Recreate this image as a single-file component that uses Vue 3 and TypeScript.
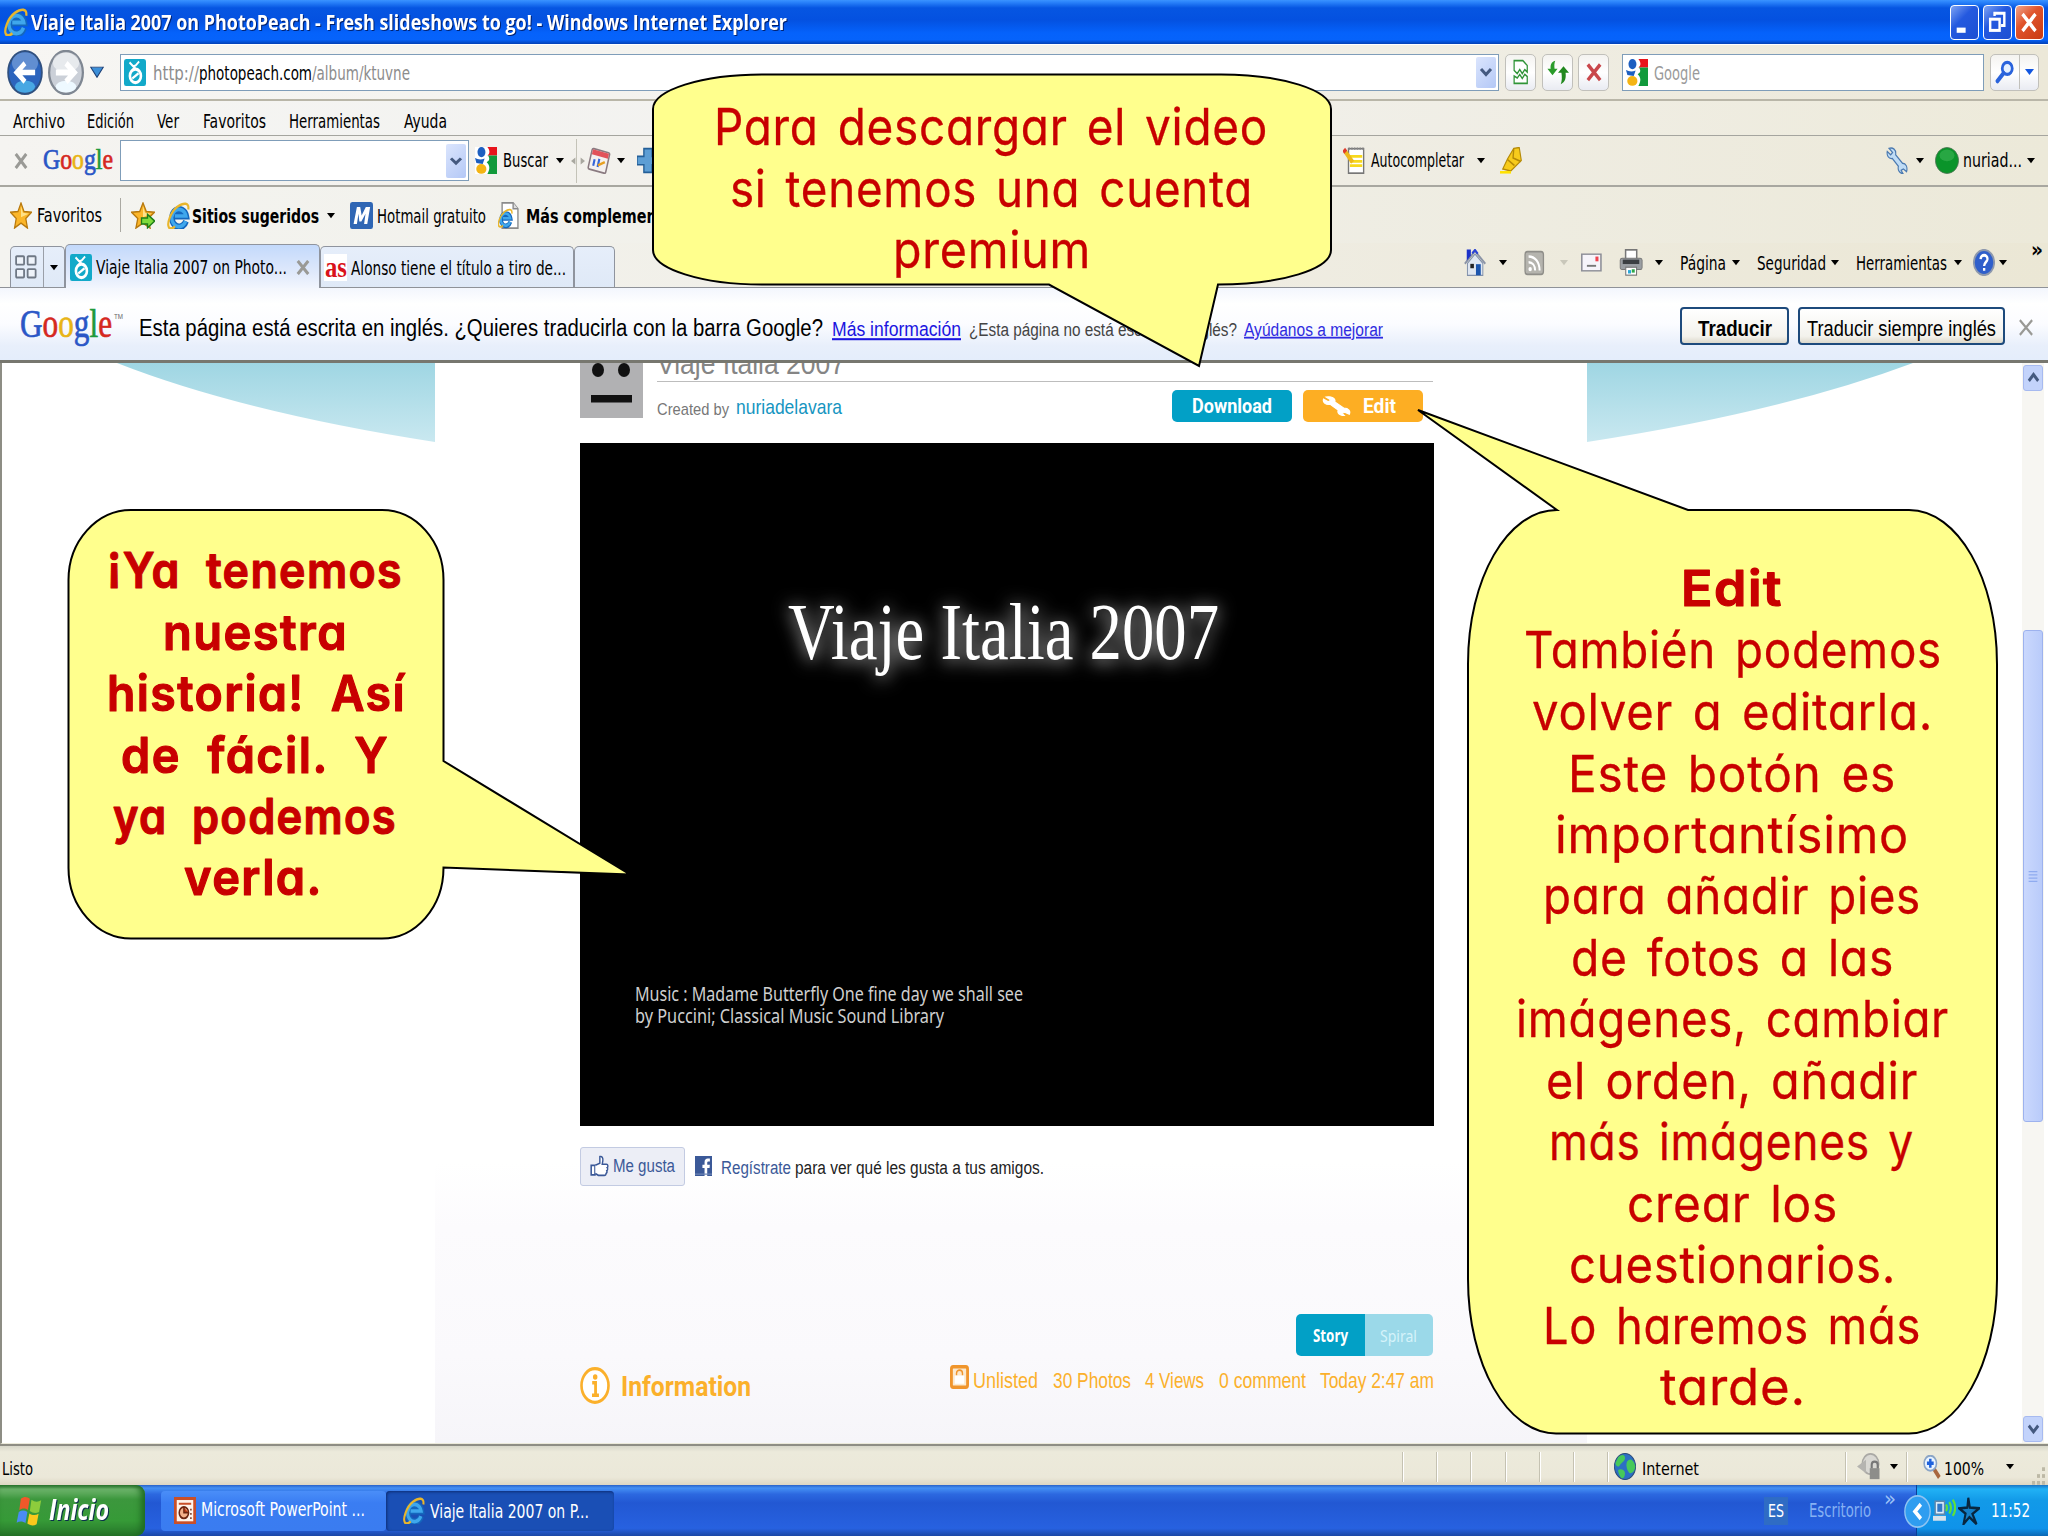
<script setup lang="ts">
import { h, type FunctionalComponent } from 'vue'

interface TextProps { t: string; w: number; s?: number; f?: string; b?: number; c?: string; dy?: number; h?: number; base?: number; i?: boolean; u?: boolean }

const families: Record<string, string> = {
  ui: '"DejaVu Sans Condensed", "DejaVu Sans", sans-serif',
  arial: '"Liberation Sans", sans-serif',
  title: '"Open Sans", sans-serif',
  serif: '"Liberation Serif", serif',
  web: '"Noto Sans", sans-serif',
  din: 'Roboto, sans-serif',
}

// A label fitted to an exact width
const T: FunctionalComponent<TextProps> = (p) => {
  const s = p.s ?? 19
  const height = p.h ?? s * 1.2
  const base = p.base ?? s * 0.96 + (p.dy ?? 0)
  return h('svg', { width: p.w, height, style: { overflow: 'visible', display: 'block' } }, [
    h('text', {
      x: 0, y: base, textLength: p.w, lengthAdjust: 'spacingAndGlyphs', fill: p.c ?? '#000',
      'font-family': families[p.f ?? 'ui'], 'font-size': s, 'font-weight': p.b ?? 400,
      'font-style': p.i ? 'italic' : 'normal', 'text-decoration': p.u ? 'underline' : 'none',
    }, p.t),
  ])
}

const letters: [string, string][] = [['G', '#2a56c6'], ['o', '#d5281f'], ['o', '#e8b416'], ['g', '#2a56c6'], ['l', '#1f9a3a'], ['e', '#d5281f']]
const Google: FunctionalComponent<{ w: number; s: number; dy?: number }> = (p) =>
  h('svg', { width: p.w, height: p.s * 1.2, style: { overflow: 'visible', display: 'block' } }, [
    h('text', { x: 0, y: p.s * 0.96 + (p.dy ?? 0), textLength: p.w, lengthAdjust: 'spacingAndGlyphs', 'font-family': families.serif, 'font-size': p.s, 'stroke-width': 0.7 },
      letters.map(([l, c]) => h('tspan', { fill: c, stroke: c }, l))),
  ])

const peach = '<rect width="16" height="16" rx="1.5" fill="#12a9c9"/><ellipse cx="8.3" cy="10" rx="4" ry="4" fill="none" stroke="#fff" stroke-width="1.9"/><path d="M6 11.6 10.6 8.4" stroke="#fff" stroke-width="1.5"/><path d="M8 6 7.6 3.4M7.4 5 4 2M8.3 4 11 1.5" stroke="#fff" stroke-width="1.3"/>'
const ie = '<path d="M13.2 11.4A5 5.2 0 1 1 13.4 8.4H5.5" fill="none" stroke="#1467bd" stroke-width="4"/><path d="M13 11.3A5 5.1 0 1 1 13.2 8.3H5.5" fill="none" stroke="#3fa7ec" stroke-width="2.2"/><path d="M14.8 4.4C15.600.2 11.600.2 7.200 2.800 2.400 6 -.2 12.800 1.300 15c.9 1 2.700.6 4.300-.5" fill="none" stroke="#e9b62c" stroke-width="1.500"/>'
const star = '<path d="M8 .6 10.2 5.6 15.6 6.1 11.5 9.8 12.7 15.4 8 12.5 3.3 15.4 4.5 9.8.4 6.1 5.8 5.6Z" fill="#fbb62a" stroke="#b8790d" stroke-width=".9"/><path d="M8 2.5 9.4 6.4 13.5 7 8 9Z" fill="#ffe188"/>'
const wrench = (fill: string, stroke: string) => `<path d="M2.2.8C5 0 7.6 1.6 7 4.6L12 9.6C14.6 9.6 15.8 12 15 14.6L12.6 13 11 13.8 12.4 15.8C9.6 15.6 8.4 13.6 9 11.4L4.6 6.8C1.8 7.2.4 5 .9 2.6L3.4 4.6 4.8 3.2Z" fill="${fill}" stroke="${stroke}" stroke-width=".8"/>`

const art: Record<string, string> = {
  peach, ie, star,
  starAdd: star + '<path d="M7 9.5h4V7.3l4.8 4-4.8 4v-2.3H7Z" fill="#7fdc3c" stroke="#1d7d18" stroke-width=".9"/>',
  gicon: '<rect width="16" height="16" fill="#fff"/><path d="M9 0h7v5H9C11 4 11 2 9 0Z" fill="#e8141b"/><path d="M9.5 5H16v11H9c2-3 2-5-.5-7C10.5 8 11 7 9.5 5Z" fill="#119a3b"/><ellipse cx="4.7" cy="3" rx="2.9" ry="3" fill="#1d5fc0"/><path d="M0 6.5c2 .8 4 1.3 7 .3L5.6 10 1 9.5Z" fill="#1d5fc0"/><ellipse cx="4.6" cy="13" rx="3.7" ry="2.9" fill="#f4b413"/>',
  calendar: '<g transform="rotate(14 8 8)"><rect x="2" y="2" width="12" height="12.5" rx="1" fill="#f4f0ef" stroke="#8a7a80"/><rect x="2.5" y="2.5" width="11" height="3" fill="#e2525a"/><path d="M5 8v4M8 7v5" stroke="#3464d8" stroke-width="1.4"/><path d="M8 11l4-3" stroke="#e8a020" stroke-width="1.5"/></g>',
  plus: '<path d="M5 1h6v4.5h5v5h-5V15H5v-4.500H0v-5h5Z" fill="#5d9ed4" stroke="#245f97"/>',
  notepad: '<rect x="4" y="1" width="11" height="14.5" fill="#fff" stroke="#777"/><path d="M5 5.5h9M5 8.5h9M5 11h9" stroke="#f7d91c" stroke-width="1.6"/><path d="M1.5 2.5 7 9" stroke="#eeb81c" stroke-width="2.8"/><path d="M.5 1.4 2 3" stroke="#e03a2b" stroke-width="2.8"/><path d="M4 1h11" stroke="#888" stroke-dasharray="1 1" stroke-width="1.4"/>',
  marker: '<path d="M10 .8 14 .3 15.5 8 7.800 14.200 2 13 5.500 7Z" fill="#f7cb1c" stroke="#b58a08" stroke-width=".8"/><path d="M5.500 7.500 10.500 11M10 1 9.500 6.500l5.500 2" fill="none" stroke="#b58a08"/><path d="M0 15h8" stroke="#ffe200" stroke-width="1.5"/>',
  wrench: wrench('#bfdcf5', '#4a79b0'),
  wrenchWhite: wrench('#fff', '#fff'),
  user: '<ellipse cx="8" cy="8" rx="7.7" ry="7.7" fill="#0a942a" stroke="#4d7052" stroke-width=".5"/><ellipse cx="8" cy="5" rx="5" ry="3.5" fill="#45b95c" opacity=".5"/>',
  m: '<rect width="16" height="16" rx="1.5" fill="#2f66b4"/><path d="M2.500 13 4.800 3h2.300l1 5L11 3h3l-2 10h-2.200l1-6-2.900 4.500H6.500L5.900 7 4.800 13Z" fill="#fff"/>',
  page: '<path d="M3 .5h8L14.500 4v11.500H3Z" fill="#fff" stroke="#8b8b8b"/><path d="M11 .5V4h3.500" fill="#ddd" stroke="#8b8b8b"/><g transform="translate(-.3 3.800) scale(.7)">' + ie + '</g>',
  quad: '<g fill="#eef3fa" stroke="#6f7885" stroke-width="1.3"><rect x=".8" y=".8" width="5.8" height="5.6" rx=".6"/><rect x="9.2" y=".8" width="5.8" height="5.6" rx=".6"/><rect x=".8" y="9.4" width="5.8" height="5.6" rx=".6"/><rect x="9.2" y="9.4" width="5.8" height="5.6" rx=".6"/></g>',
  home: '<path d="M2.500 8.500 8 3l5.700 5.500V15.600H2.500Z" fill="#dfe6f0" stroke="#8190aa" stroke-width=".7"/><path d="M.6 8.800 8 1.200l7.500 7.600" fill="none" stroke="#8b94a6" stroke-width="1.3"/><path d="M2 .3h3v3.500L2 7Z" fill="#1c32c9"/><path d="M6 2.600 8 .6 10 2.800" fill="none" stroke="#2a42d4" stroke-width="1.4"/><rect x="8.7" y="9" width="3.5" height="6.5" fill="#1c55ad"/><rect x="4.6" y="8.8" width="2.6" height="2.6" fill="#222"/>',
  rss: '<rect x=".8" y="1.5" width="14" height="13.5" rx="1.8" fill="#b5b4ae" stroke="#8f8e89"/><path d="M3.500 4.400c5 0 8.400 3.500 8.400 8.400M3.500 7.900c3 0 5 2 5 4.900" fill="none" stroke="#fff" stroke-width="1.5"/><circle cx="4.7" cy="11.9" r="1.3" fill="#fff"/>',
  mail: '<rect x=".6" y="1" width="14.6" height="14" fill="#f6f4fa" stroke="#8e8f98" stroke-width="1.2"/><path d="M4.500 10.800h7" stroke="#777" stroke-width="1.6"/><rect x="11" y="3" width="2.3" height="4" fill="#f0434e"/>',
  printer: '<rect x="4.4" y=".5" width="7.4" height="7" fill="#fff" stroke="#777"/><rect x=".8" y="5.5" width="14.6" height="6.7" rx="1.2" fill="#9a9ea2" stroke="#777" stroke-width=".6"/><rect x="2.5" y="6.3" width="11" height="2.6" fill="#3b3f42"/><rect x="4.5" y="10.8" width="7.2" height="4.7" fill="#fff" stroke="#777" stroke-width=".7"/><path d="M6 12.500h2v2H6Z" fill="#2aa7d8"/><path d="M8.500 12h2v2h-2Z" fill="#2fa84a"/>',
  help: '<ellipse cx="8" cy="8" rx="7.4" ry="7.4" fill="#2f5fcb" stroke="#8d98ad" stroke-width="1.3"/><path d="M5.500 6C5.600 2.900 10.700 3 10.500 6c-.2 1.800-2.400 1.800-2.400 4M8.100 11.200v1.700" fill="none" stroke="#fff" stroke-width="1.7"/>',
  broken: '<path d="M2.500 1h7L13 4v4l-2-1.500L9 9 7 6.500 5 9 2.500 7Z" fill="#fff" stroke="#2f9437"/><path d="M2.500 10.500 5 11.700 7 9.500 9 12l2-2.500 2 1.300V15H2.500Z" fill="#fff" stroke="#2f9437"/>',
  refresh: '<path d="M6 1C3 1.500 2.300 4 2.700 6H.3L4 10 7.700 6H5.500C5.200 4 5.300 2.500 6 1Z" fill="#2a9b2a"/><path d="M10 15.500c3.300-1 4-4 3.500-7H16L12 4.500 8 8.500h2.500C10.900 11 11 13.500 10 15.500Z" fill="#22881f"/>',
  stop: '<path d="M2.500 2 13.500 14.500M13.500 2 2.500 14.500" stroke="#c9474b" stroke-width="3"/>',
  search: '<circle cx="9.800" cy="5.600" r="4" fill="#e5f0ff" stroke="#2a63dc" stroke-width="2.2"/><path d="M6.800 8.800 2 14" stroke="#2a63dc" stroke-width="3" stroke-linecap="round"/>',
  chev: '<path d="M3 5 8 10.500 13 5" fill="none" stroke="#44597f" stroke-width="3"/>',
  up: '<path d="M3 10.500 8 5 13 10.500" fill="none" stroke="#44597f" stroke-width="3"/>',
  tri: '<path d="M0 2h16L8 14Z"/>',
  triGray: '<path d="M0 2h16L8 14Z" fill="#c9c7ba"/>',
  triBlue: '<path d="M0 2h16L8 14Z" fill="#1256e0"/>',
  triNav: '<path d="M.8 1.500h14.400L8 15Z" fill="#3c8fd8" stroke="#1d3f75" stroke-width="1.3"/>',
  x: '<path d="M2 1 14 15M14 1 2 15" stroke="#9a9a96" stroke-width="3.4"/>',
  xThin: '<path d="M1 1 15 15M15 1 1 15" stroke="#999995" stroke-width="2.4"/>',
  globe: '<ellipse cx="8" cy="8" rx="7.7" ry="7.7" fill="#2c6fc4" stroke="#2b4b77" stroke-width=".6"/><path d="M3 2.500c3-2 5-1.500 5 .5S5 6 4 7.500 1 7 1 6ZM9.500 5c2-2 4-1.500 5.500 1.500S13.500 12 12 12 8 8 9.500 5ZM3 10c2-1 5 0 5 2s-1 3-2 3-3-3-3-5Z" fill="#46c95a"/>',
  shield: '<ellipse cx="9" cy="6.5" rx="5.5" ry="6" fill="#d9d8d3" stroke="#aaa9a5"/><path d="M0 8 6 4v8Z" fill="#b5b4b0"/><rect x="8.5" y="9" width="6.5" height="6.5" fill="#8d8d8a"/><path d="M9.800 9V7c0-2.500 4-2.500 4 0v2" fill="none" stroke="#777" stroke-width="1.4"/>',
  zoom: '<path d="M9.500 9 14.500 15" stroke="#a8673e" stroke-width="3"/><ellipse cx="6.5" cy="5.5" rx="5.5" ry="5" fill="#e9f4ff" stroke="#8ba5c6" stroke-width="1.4"/><path d="M6.500 2.500v6M3.500 5.500h6" stroke="#1f62dc" stroke-width="2.2"/>',
  flag: '<path d="M3 1.500C5 0 7 .3 8.500 1.500L7.300 7.500C5.500 6.300 3.700 6.500 2 7.500Z" fill="#f0582a"/><path d="M9.500 2c2 1.300 4 1.300 6 .3L14.200 8.500c-2 1-4 .6-5.700-.5Z" fill="#8dcc3c"/><path d="M1.700 8.500c1.800-1 3.600-1 5.300 0L5.800 14.500C4 13.300 2 13.500.4 14.300Z" fill="#4a8cf2"/><path d="M8.200 9.300c1.800 1.100 3.800 1.200 5.700.2L12.700 15c-2 1.100-4 .8-5.700-.3Z" fill="#fcc81c"/>',
  ppt: '<rect width="16" height="16" fill="#c94f28"/><rect x="2" y="1.8" width="12" height="12.6" fill="#fff3ea"/><path d="M3.500 4h9" stroke="#c94f28" stroke-width="1.2"/><ellipse cx="7.2" cy="9.3" rx="3.4" ry="3.4" fill="#f3b08a" stroke="#6c2510" stroke-width="1.1"/><path d="M7.200 6v3.300h3.300" fill="#c43d17" stroke="#6c2510"/><path d="M12.300 7v1M12.300 9.500v1M12.300 12v1" stroke="#6c2510"/>',
  net: '<rect x="1.5" y="2" width="6.5" height="8" fill="#e1effa" stroke="#6088ad"/><rect x="3" y="3.5" width="3.5" height="5" fill="#3178c8"/><path d="M0 12.500h9" stroke="#d8e2ea" stroke-width="3"/><path d="M9 4c1 1 1 3 0 4M11.300 2.500c1.600 2 1.600 5 0 7M13.700 1c2.300 3 2.300 7 0 10" fill="none" stroke="#5fe03a" stroke-width="1.5"/>',
  spark: '<path d="M7.500.5 8.600 6 15.500 6.500 10.500 9.700 13.500 15.500 8.300 11.500 4 15.500 5.500 9.500.8 6.500 6.800 6Z" fill="#1580c8" stroke="#08263f" stroke-width="1.5"/>',
  like: '<path d="M1 7.500h3.200v7H1Z" fill="#fff" stroke="#3b5998" stroke-width="1.3"/><path d="M4.500 7.500 8.300 6V1.200c2-.5 2.800 1.200 2.500 3L10.300 6.700h3.500c1.700 0 1.400 2.200.7 2.500.7.700.3 1.900-.4 2.200.4.800 0 1.700-.6 2 .1 1-.5 1.400-1.500 1.400H7L4.500 13.500" fill="#fff" stroke="#3b5998" stroke-width="1.2"/>',
  fb: '<rect width="16" height="16" fill="#3b5998"/><path d="M9 16V9.500H7V7h2V5c0-2 1.200-3 3-3h2v2.400h-1.300c-.9 0-1.200.4-1.200 1.200V7H14l-.3 2.500h-2.200V16Z" fill="#fff"/><path d="M0 14.500h16" stroke="#6d84b4"/>',
  lock: '<rect x="1.2" y="1.2" width="13.6" height="13.6" rx="1.5" fill="#fbe9cf" stroke="#f0952c" stroke-width="2.4"/><path d="M5.500 7V5.500c0-2.800 5-2.800 5 0V7" fill="none" stroke="#f0952c" stroke-width="1.2"/><path d="M4 7h8v5.500H4Z" fill="#fff"/>',
  info: '<ellipse cx="8" cy="8" rx="7.2" ry="7.3" fill="#fff" stroke="#fbb02b" stroke-width="1.4"/><path d="M6.500 6.800H8.300V12M6.400 12.200h3.700" fill="none" stroke="#fbb02b" stroke-width="1.5"/><circle cx="8.1" cy="4.3" r="1.2" fill="#fbb02b"/>',
  min: '<rect x="3.5" y="10.8" width="5.5" height="2.6" fill="#fff"/>',
  restore: '<path d="M6.500 5V3.600h6V9.800h-2" fill="none" stroke="#fff" stroke-width="1.5"/><rect x="3.8" y="6.6" width="5.8" height="5.6" fill="none" stroke="#fff" stroke-width="1.5"/>',
  close: '<path d="M4 4 12 12.500M12 4 4 12.500" stroke="#fff" stroke-width="2"/>',
  back: '<ellipse cx="8" cy="8" rx="7.5" ry="7.6" fill="#2c64bd" stroke="#30507f" stroke-width=".8"/><ellipse cx="8" cy="4.6" rx="5.8" ry="3.8" fill="#7ea4dc" opacity=".65"/><ellipse cx="8" cy="13" rx="4.5" ry="2.2" fill="#54c3f3" opacity=".7"/><path d="M12.500 8H5M8 4.700 4.300 8 8 11.300" fill="none" stroke="#fff" stroke-width="1.9"/>',
  fwd: '<ellipse cx="8" cy="8" rx="7.5" ry="7.6" fill="#cbd0d8" stroke="#7f8792" stroke-width="1"/><ellipse cx="8" cy="4.4" rx="5.8" ry="3.6" fill="#fff" opacity=".55"/><ellipse cx="8" cy="13" rx="4.6" ry="2.1" fill="#eef9ff"/><path d="M3.500 8H11M8 4.700 11.700 8 8 11.300" fill="none" stroke="#fff" stroke-width="2.1"/>',
  grip: '<g fill="#bdb9a6"><rect x="11" y="1" width="3" height="3"/><rect x="6" y="6.5" width="3" height="3"/><rect x="11" y="6.5" width="3" height="3"/><rect x="1" y="12" width="3" height="3"/><rect x="6" y="12" width="3" height="3"/><rect x="11" y="12" width="3" height="3"/></g>',
  diamonds: '<path d="M0 8 5 4v8ZM16 8 11 4v8Z" fill="#a9a8a0"/>',
  thumbGrip: '<path d="M1 2h14M1 6h14M1 10h14M1 14h14" stroke="#8fabf0" stroke-width="1.8"/>',
  trayArrow: '<ellipse cx="8" cy="8" rx="7.5" ry="7.6" fill="#2f9df0" stroke="#8fc4f2" stroke-width=".8"/><path d="M10 4.500 6.500 8 10 11.500" fill="none" stroke="#fff" stroke-width="2"/>',
}

const Ic: FunctionalComponent<{ n: string; w?: number; h?: number }> = (p) =>
  h('svg', { width: p.w ?? 22, height: p.h ?? 27, viewBox: '0 0 16 16', preserveAspectRatio: 'none', style: { display: 'block' }, innerHTML: art[p.n] })

const menus: [string, number][] = [['Archivo', 52], ['Edición', 47], ['Ver', 22], ['Favoritos', 63], ['Herramientas', 91], ['Ayuda', 43]]
const stats: [string, number][] = [['Unlisted', 65], ['30 Photos', 78], ['4 Views', 59], ['0 comment', 87], ['Today 2:47 am', 114]]

interface Line { t: string; x: number; w: number; y: number; bold?: boolean }
interface Callout { path: string; lines: Line[] }
const callouts: Callout[] = [
  {
    path: 'M762 74.5H1221C1282 74.5 1331 90 1331 109V250C1331 269 1282 284.5 1218 284.5L1199 366 1049 284.5H762C702 284.5 653 269 653 250V109C653 90 702 74.5 762 74.5Z',
    lines: [
      { t: 'Para descargar el video', x: 714, w: 554, y: 145 },
      { t: 'si tenemos una cuenta', x: 730, w: 523, y: 207 },
      { t: 'premium', x: 893, w: 198, y: 268 },
    ],
  },
  {
    path: 'M131 510H382C416 510 443.5 541 443.5 580V761L630 874.5 443.5 867.5C443.5 907 416 938.5 382 938.5H131C97 938.5 68.5 907 68.5 868V580C68.5 541 97 510 131 510Z',
    lines: [
      { t: '¡Ya tenemos', x: 107, w: 296, y: 588, bold: true },
      { t: 'nuestra', x: 163, w: 185, y: 650, bold: true },
      { t: 'historia! Así', x: 107, w: 299, y: 711, bold: true },
      { t: 'de fácil. Y', x: 121, w: 268, y: 773, bold: true },
      { t: 'ya podemos', x: 113, w: 284, y: 834, bold: true },
      { t: 'verla.', x: 184, w: 139, y: 895, bold: true },
    ],
  },
  {
    path: 'M1557 510 1418 410 1688 510H1909C1958 510 1997 579 1997 664V1279C1997 1364 1958 1433.5 1909 1433.5H1556C1507 1433.5 1468 1364 1468 1279V664C1468 579 1507 510 1557 510Z',
    lines: [
      { t: 'Edit', x: 1681, w: 102, y: 606, bold: true },
      { t: 'También podemos', x: 1524, w: 418, y: 668 },
      { t: 'volver a editarla.', x: 1532, w: 401, y: 730 },
      { t: 'Este botón es', x: 1568, w: 328, y: 792 },
      { t: 'importantísimo', x: 1555, w: 354, y: 853 },
      { t: 'para añadir pies', x: 1543, w: 378, y: 914 },
      { t: 'de fotos a las', x: 1571, w: 323, y: 976 },
      { t: 'imágenes, cambiar', x: 1516, w: 433, y: 1037 },
      { t: 'el orden, añadir', x: 1546, w: 372, y: 1099 },
      { t: 'más imágenes y', x: 1549, w: 365, y: 1160 },
      { t: 'crear los', x: 1627, w: 211, y: 1222 },
      { t: 'cuestionarios.', x: 1569, w: 327, y: 1283 },
      { t: 'Lo haremos más', x: 1543, w: 378, y: 1344 },
      { t: 'tarde.', x: 1660, w: 146, y: 1405 },
    ],
  },
]
</script>

<template>
  <div class="screen">
    <header class="bar title">
      <Ic n="ie" :w="24" :h="28" />
      <T t="Viaje Italia 2007 on PhotoPeach - Fresh slideshows to go! - Windows Internet Explorer" :w="756" :s="21" f="title" :b="700" c="#fff" class="shadow" :dy="1" />
      <div class="wbtn"><Ic n="min" :w="26" :h="32" /></div>
      <div class="wbtn"><Ic n="restore" :w="26" :h="32" /></div>
      <div class="wbtn red"><Ic n="close" :w="26" :h="32" /></div>
    </header>

    <div class="bar address">
      <Ic n="back" :w="36" :h="45" />
      <Ic n="fwd" :w="36" :h="45" />
      <Ic n="triNav" :w="14" :h="12" />
      <div class="field url">
        <Ic n="peach" />
        <div class="urltext">
          <T t="http://" :w="46" :s="20" c="#8d8d8d" :dy="1" /><T t="photopeach.com" :w="113" :s="20" :dy="1" /><T t="/album/ktuvne" :w="98" :s="20" c="#8d8d8d" :dy="1" />
        </div>
        <div class="drop"><Ic n="chev" :w="16" :h="16" /></div>
      </div>
      <div class="tbtn"><Ic n="broken" :w="20" :h="26" /></div>
      <div class="tbtn"><Ic n="refresh" :w="22" :h="26" /></div>
      <div class="tbtn"><Ic n="stop" :w="18" :h="20" /></div>
      <div class="field find"><Ic n="gicon" /><T t="Google" :w="46" :s="19" c="#9a9a9a" :dy="1" /></div>
      <div class="tbtn wide"><Ic n="search" :w="20" :h="24" /><i></i><Ic n="triBlue" :w="9" :h="8" /></div>
    </div>

    <nav class="bar menu">
      <T v-for="m in menus" :key="m[0]" :t="m[0]" :w="m[1]" :s="19" :dy="3" />
    </nav>

    <div class="bar tools">
      <Ic n="x" :w="14" :h="16" />
      <Google :w="70" :s="29" :dy="-2" />
      <div class="field query"><div class="drop"><Ic n="chev" :w="16" :h="14" /></div></div>
      <Ic n="gicon" /><T t="Buscar" :w="45" :dy="-0.5" /><Ic n="tri" :w="8" :h="7" />
      <div class="split"><Ic n="diamonds" :w="14" :h="14" /></div>
      <Ic n="calendar" :w="24" /><Ic n="tri" :w="8" :h="7" />
      <Ic n="plus" /><Ic n="notepad" /><T t="Autocompletar" :w="93" :dy="-0.5" /><Ic n="tri" :w="8" :h="7" />
      <Ic n="marker" /><Ic n="wrench" /><Ic n="tri" :w="8" :h="7" />
      <Ic n="user" :w="24" /><T t="nuriad..." :w="59" :dy="-0.5" /><Ic n="tri" :w="8" :h="7" />
    </div>

    <div class="bar favs">
      <Ic n="star" /><T t="Favoritos" :w="65" /><span class="rule"></span>
      <Ic n="starAdd" :w="24" /><Ic n="ie" :w="23" />
      <T t="Sitios sugeridos" :w="127" :b="700" :dy="1" /><Ic n="tri" :w="8" :h="7" />
      <Ic n="m" :w="23" /><T t="Hotmail gratuito" :w="109" :dy="1" />
      <Ic n="page" /><T t="Más complementos" :w="156" :b="700" :dy="1" />
    </div>

    <div class="tabrow">
      <div class="tab quick"><Ic n="quad" :w="22" :h="24" /><span></span><Ic n="tri" :w="8" :h="7" /></div>
      <div class="tab on"><Ic n="peach" /><T t="Viaje Italia 2007 on Photo..." :w="191" /><Ic n="x" :w="14" :h="15" /></div>
      <div class="tab second"><div class="as"><T t="as" :w="22" :s="29" f="serif" :b="700" c="#d9121b" :dy="-4.5" /></div><T t="Alonso tiene el título a tiro de..." :w="215" :dy="1" /></div>
      <div class="tab blank"></div>
      <div class="commands">
        <Ic n="home" /><Ic n="tri" :w="8" :h="7" />
        <Ic n="rss" :w="21" /><Ic n="triGray" :w="8" :h="7" />
        <Ic n="mail" :w="21" :h="19" />
        <Ic n="printer" :w="24" /><Ic n="tri" :w="8" :h="7" />
        <T t="Página" :w="46" :dy="1" /><Ic n="tri" :w="8" :h="7" />
        <T t="Seguridad" :w="69" :dy="1" /><Ic n="tri" :w="8" :h="7" />
        <T t="Herramientas" :w="91" :dy="1" /><Ic n="tri" :w="8" :h="7" />
        <Ic n="help" /><Ic n="tri" :w="8" :h="7" />
        <T t="»" :w="12" :s="22" :b="700" :dy="-13" />
      </div>
    </div>

    <div class="bar translate">
      <Google :w="92" :s="41" :dy="-1.5" />
      <T t="TM" :w="9" :s="8" f="arial" c="#666" :dy="-8" />
      <T t="Esta página está escrita en inglés. ¿Quieres traducirla con la barra Google?" :w="684" :s="23" f="arial" :dy="3.5" />
      <T t="Más información" :w="129" :s="20.5" f="arial" c="#1a14e0" :u="true" :dy="4.5" />
      <T t="¿Esta página no está escrita en inglés?" :w="268" :s="18" f="arial" c="#444" :dy="5.5" />
      <T t="Ayúdanos a mejorar" :w="139" :s="18" f="arial" c="#2f2be0" :u="true" :dy="5.5" />
      <button class="xp"><T t="Traducir" :w="74" :s="22" f="arial" :b="700" :dy="1.5" /></button>
      <button class="xp"><T t="Traducir siempre inglés" :w="189" :s="22" f="arial" :dy="1.5" /></button>
      <Ic n="xThin" :w="14" :h="17" class="close-note" />
    </div>

    <main class="view">
      <svg class="side" width="433" height="1080"><defs><linearGradient id="fade" x2="0" y2="1"><stop stop-color="#9fd6e3" /><stop offset="1" stop-color="#c9e8f0" /></linearGradient></defs><path d="M115 0Q240 49 433 79V0Z" fill="url(#fade)" /></svg>
      <section class="page">
        <div class="head">
          <svg width="63" height="55"><rect width="63" height="55" fill="#b1b1b3" /><ellipse cx="18" cy="7" rx="6" ry="7" fill="#111" /><ellipse cx="44" cy="7" rx="6" ry="7" fill="#111" /><rect x="11" y="32" width="41" height="7.5" fill="#111" /></svg>
          <div class="meta">
            <div class="name"><T t="Viaje Italia 2007" :w="188" :s="30" f="arial" c="#858585" :h="18" :base="11" /></div>
            <div class="by">
              <T t="Created by" :w="72" :s="17" f="arial" c="#777" :dy="2.5" />
              <T t="nuriadelavara" :w="106" :s="21" f="arial" c="#1695c1" :dy="0.5" />
              <div class="pill teal"><T t="Download" :w="80" :s="20" f="din" :b="700" c="#fff" /></div>
              <div class="pill amber"><Ic n="wrenchWhite" :w="29" :h="20" /><T t="Edit" :w="33" :s="20" f="din" :b="700" c="#fff" /></div>
            </div>
          </div>
        </div>
        <div class="video">
          <T t="Viaje Italia 2007" :w="431" :s="81" f="serif" c="#fff" :h="100" :base="75" class="glow" />
          <div class="music">
            <T t="Music : Madame Butterfly One fine day we shall see" :w="388" :s="20" f="web" c="#cfcfcf" :h="22" :base="17" />
            <T t="by Puccini; Classical Music Sound Library" :w="309" :s="20" f="web" c="#cfcfcf" :h="22" :base="17" />
          </div>
        </div>
        <div class="social">
          <div class="like"><Ic n="like" :w="19" :h="22" /><T t="Me gusta" :w="62" :s="18" f="arial" c="#3b5998" /></div>
          <Ic n="fb" :w="17" :h="20" />
          <T t="Regístrate" :w="70" :s="18" f="arial" c="#3b5998" :dy="2" />
          <T t="para ver qué les gusta a tus amigos." :w="249" :s="18" f="arial" c="#222" :dy="2" />
        </div>
        <div class="switch">
          <div class="story"><T t="Story" :w="35" :s="17" f="web" :b="700" c="#fff" /></div>
          <div class="spiral"><T t="Spiral" :w="37" :s="17" f="web" c="#d5f3fa" /></div>
        </div>
        <div class="info">
          <Ic n="info" :w="30" :h="37" />
          <T t="Information" :w="130" :s="28" f="din" :b="700" c="#fbb02b" />
          <div class="stats">
            <Ic n="lock" :w="19" :h="24" />
            <T v-for="s in stats" :key="s[0]" :t="s[0]" :w="s[1]" :s="22" f="arial" c="#fbb02b" :dy="3" />
          </div>
        </div>
      </section>
      <svg class="side" width="435" height="1080"><path d="M0 0H326Q195 49 0 79Z" fill="url(#fade)" /></svg>
      <aside class="scroll">
        <div class="sbtn"><Ic n="up" :w="15" :h="18" /></div>
        <div class="thumb"><Ic n="thumbGrip" :w="10" :h="13" /></div>
        <div class="sbtn"><Ic n="chev" :w="15" :h="18" /></div>
      </aside>
    </main>

    <footer class="bar status">
      <T t="Listo" :w="31" :s="18" :dy="2" />
      <span v-for="n in 7" :key="n" class="rule"></span>
      <Ic n="globe" /><T t="Internet" :w="57" :s="18" :dy="2" />
      <span class="rule"></span><Ic n="shield" :w="24" /><Ic n="tri" :w="8" :h="7" />
      <span class="rule"></span><Ic n="zoom" :w="18" :h="24" /><T t="100%" :w="40" :s="18" :dy="2" /><Ic n="tri" :w="8" :h="7" />
      <Ic n="grip" :w="16" :h="20" class="grip" />
    </footer>

    <div class="taskbar">
      <div class="start"><Ic n="flag" :w="26" :h="30" /><T t="Inicio" :w="60" :s="28" f="title" :b="700" c="#fff" :i="true" class="shadow" :dy="-1" /></div>
      <div class="task"><Ic n="ppt" /><T t="Microsoft PowerPoint ..." :w="164" c="#fff" :dy="-1" /></div>
      <div class="task pressed"><Ic n="ie" /><T t="Viaje Italia 2007 on P..." :w="159" c="#fff" :dy="1" /></div>
      <div class="lang"><T t="ES" :w="16" :s="17" c="#fff" :dy="1" /></div>
      <T t="Escritorio" :w="62" c="#86b1f3" class="desk" />
      <T t="»" :w="12" :s="22" c="#9cc2f7" :dy="-12" class="more" />
      <div class="tray">
        <Ic n="trayArrow" :w="27" :h="33" class="arrow" />
        <Ic n="net" :w="23" :h="26" /><Ic n="spark" :w="22" :h="28" />
        <T t="11:52" :w="39" c="#fff" class="clock" :dy="-0.5" />
      </div>
    </div>

    <svg class="callouts" width="2048" height="1536">
      <g v-for="(c, k) in callouts" :key="k">
        <path :d="c.path" fill="#ffff8d" stroke="#000" stroke-width="2" />
        <text v-for="l in c.lines" :key="l.t" :x="l.x" :y="l.y" :textLength="l.w" lengthAdjust="spacingAndGlyphs" :class="['note', { bold: l.bold }]">{{ l.t }}</text>
      </g>
    </svg>
  </div>
</template>

<style>
body { margin: 0; overflow: hidden; }
</style>

<style scoped>
.screen { position: relative; width: 2048px; height: 1536px; overflow: hidden; background: #fff; display: flex; flex-direction: column; }
.screen, .screen * { box-sizing: border-box; }
.bar { display: grid; align-items: center; flex: none; }
.shadow { filter: drop-shadow(1.5px 1.5px 0.5px rgba(0, 20, 80, 0.8)); }

.title { height: 44px; padding-left: 4px; grid-template-columns: 27px 1919px 33px 32px 31px; background: linear-gradient(#3a93ff 0, #2a83fb 5%, #0656e2 18%, #0451e0 45%, #0562fb 75%, #0663fb 90%, #0340b4 100%); }
.wbtn { width: 29px; height: 35px; border: 1.5px solid #fff; border-radius: 4px; background: linear-gradient(135deg, #7fa4f3, #2459df 40%, #1d4fd2); overflow: hidden; }
.wbtn.red { background: linear-gradient(135deg, #f0a58c, #e0542c 40%, #c93a12); }

.address { height: 57px; padding-left: 7px; border-top: 1px solid #fff; border-bottom: 2px solid #b9b6a8; grid-template-columns: 41px 42px 30px 1385px 37px 36px 44px 368px 50px; background: linear-gradient(90deg, #f7f6f3, #f2f1ec 50%, #ece8d8); }
.field { background: #fff; border: 1.5px solid #7f9db9; height: 37px; display: flex; align-items: center; }
.url { width: 1379px; padding: 0 2px 0 3px; }
.urltext { display: flex; margin-left: 7px; flex: 1; }
.drop { width: 20px; height: 31px; border-radius: 2px; background: linear-gradient(135deg, #dbe5fd, #b4c8f6); display: grid; place-items: center; }
.tbtn { width: 31px; height: 37px; border: 1.5px solid #c1c0bb; border-radius: 5px; background: linear-gradient(#f4f3f0, #fff 50%, #e9ebf2); display: grid; place-items: center; }
.find { width: 362px; padding-left: 3px; gap: 6px; }
.wide { width: 49px; grid-template-columns: 28px 1px 18px; }
.wide i { width: 1px; height: 34px; background: #c1c0bb; }

.menu { height: 35px; padding-left: 13px; border-bottom: 1.5px solid #a5a59f; grid-template-columns: 74px 70px 46px 86px 115px 60px; background: linear-gradient(90deg, #f5f5f3, #f2f1ee 50%, #edeada); }
.tools { height: 51px; padding-left: 14px; border-bottom: 2px solid #a8a7a0; grid-template-columns: 29px 77px 355px 28px 53px 15px 16px 30px 20px 706px 28px 106px 23px 386px 30px 19px 28px 64px 20px; background: linear-gradient(90deg, #f5f4f1, #f1efe9 50%, #ece9d9); }
.query { width: 349px; height: 41px; justify-content: flex-end; padding-right: 2px; }
.query .drop { height: 34px; }
.split { display: grid; place-items: center; width: 10px; height: 44px; background: linear-gradient(#c4c3b8, #c4c3b8) center / 1px 100% no-repeat; }
.favs { height: 56px; padding-left: 10px; grid-template-columns: 27px 83px 11px 36px 25px 135px 23px 27px 121px 28px 200px; background: linear-gradient(90deg, #f4f4f0, #f0efe8 50%, #ece9d9); }
.favs .rule { width: 1px; height: 34px; background: #aaa9a2; }

.tabrow { height: 45px; flex: none; display: flex; align-items: flex-end; padding-left: 10px; border-bottom: 1.5px solid #8f9298; background: linear-gradient(90deg, #f4f4f0, #f0eee6 50%, #ebe7d5); }
.tab { height: 41px; border: 1.5px solid #8f949e; border-bottom: 0; border-radius: 5px 5px 0 0; background: linear-gradient(#e6eefa, #dfe9f7); display: flex; align-items: center; }
.quick { width: 55px; padding-left: 4px; }
.quick span { width: 1px; height: 40px; background: #9a9fa8; margin: 0 6px 0 6px; }
.on { width: 255px; height: 46px; margin-bottom: -3px; background: linear-gradient(#c3d9fb, #dfe9fb 60%, #f4f7fe); padding-left: 4px; gap: 4px; }
.on svg:last-child { margin-left: 5px; }
.second { width: 254px; padding-left: 3px; gap: 4px; }
.as { background: #fff; width: 23px; height: 27px; display: grid; place-items: center; }
.blank { width: 41px; }
.commands { margin-left: 849px; height: 45px; padding-bottom: 4px; display: grid; align-items: center; grid-template-columns: 35px 25px 36px 21px 38px 36px 25px 52px 25px 74px 25px 98px 19px 26px 32px 17px; }

.translate { height: 75px; padding-left: 20px; grid-template-columns: 94px 25px 693px 137px 275px 436px 118px 221px 20px; background: linear-gradient(#f3f6fd 0, #fff 22%, #fbfcff 50%, #e8effb 80%, #e4edfb); border-bottom: 3px solid #77776f; }
.xp { margin: 4px 0 0; padding: 0; height: 38px; border: 2px solid #1d4a7c; border-radius: 4px; background: linear-gradient(#fff, #f3f2ec 80%, #dcd8cb); display: grid; place-items: center; width: 109px; }
.xp + .xp { width: 207px; }
.close-note { margin-top: 7px; }

.view { flex: none; height: 1081px; display: flex; border-left: 2px solid #8d8d84; border-bottom: 1.5px solid #ebe9da; overflow: hidden; }
.side { flex: none; display: block; }
.page { width: 1152px; flex: none; padding: 0 153px 0 145px; background: linear-gradient(#fff 74%, #fcfbfd 80%, #faf9fc 92%, #f6f5f9 100%); }
.head { height: 80px; display: flex; }
.head > svg { flex: none; }
.meta { margin-left: 14px; width: 776px; }
.name { height: 19px; border-bottom: 1.5px solid #bdbdbd; }
.by { display: flex; align-items: center; margin-top: 8px; height: 32px; }
.by svg + svg { margin-left: 7px; }
.pill { width: 120px; height: 32px; border-radius: 5px; display: flex; align-items: center; justify-content: center; }
.teal { background: #02a0c6; margin-left: 330px; }
.amber { background: #fdae23; margin-left: 11px; }
.pill.amber { justify-content: flex-start; padding-left: 19px; }
.pill.amber svg + svg { margin-left: 12px; }
.video { height: 683px; background: #000; padding-top: 141px; }
.glow { margin-left: 208px; filter: drop-shadow(0 2px 9px rgba(255, 255, 255, 0.85)); }
.music { margin: 300px 0 0 55px; }
.social { height: 80px; display: flex; align-items: center; }
.like { width: 105px; height: 39px; border: 1.5px solid #c3cbe2; border-radius: 3px; background: #eceef6; display: flex; align-items: center; padding-left: 9px; gap: 4px; margin-right: 10px; }
.social > svg + svg { margin-left: 9px; }
.social > svg + svg + svg { margin-left: 4px; }
.switch { margin: 108px 0 0 716px; height: 42px; width: 137px; display: flex; border-radius: 5px; overflow: hidden; }
.switch > div { flex: 1; display: grid; place-items: center; padding-top: 3px; }
.story { background: #02a0c6; }
.spiral { background: #9bd9e9; }
.info { height: 59px; display: flex; align-items: center; gap: 11px; }
.stats { display: flex; align-items: center; margin: -16px 0 0 188px; width: 484px; justify-content: space-between; }
.stats svg:first-child { margin-right: -10px; }

.scroll { width: 22px; flex: none; background: #f7f6f2; padding: 2px 0; display: flex; flex-direction: column; align-items: center; }
.sbtn { width: 20px; height: 26px; border: 1px solid #a7baf0; border-radius: 3px; background: #c3d3fb; display: grid; place-items: center; flex: none; }
.thumb { width: 20px; height: 492px; margin: 239px 0 294px; border: 1px solid #9db2ee; border-radius: 3px; background: linear-gradient(90deg, #cad8fd, #b9cbfa); display: grid; place-items: center; flex: none; }

.status { height: 41px; padding-left: 2px; border-top: 2px solid #8e8d84; grid-template-columns: 1400px 34px 34px 35px 34px 34px 34px 7px 28px 203px 12px 33px 16px 17px 21px 62px 25px 17px; background: linear-gradient(#d8d7ca, #eceadb 15%, #ebe8d9 80%, #ded7c3); }
.status > * { position: relative; top: 1px; }
.status .rule { width: 2px; height: 30px; background: linear-gradient(90deg, #c5c2b2 50%, #fff 50%); }
.grip { align-self: end; }

.taskbar { height: 51px; flex: none; display: flex; align-items: center; background: linear-gradient(#2a62c8 0, #4590f4 6%, #2c68e0 18%, #2258d3 35%, #2761e0 85%, #1a46a5); }
.start { width: 145px; height: 51px; display: flex; align-items: center; padding-left: 16px; gap: 7px; border-radius: 0 9px 9px 0; background: linear-gradient(#2f7a33 0, #6fb56d 8%, #3c973d 28%, #369a37 70%, #26752a); box-shadow: inset -4px 0 6px #1f6b22; }
.task { width: 225px; height: 40px; margin-left: 16px; padding-left: 13px; gap: 5px; border-radius: 4px; display: flex; align-items: center; background: linear-gradient(#4a8ef8, #3a7df2 30%, #3a7cf0); }
.pressed { width: 228px; margin-left: 0; padding-left: 17px; background: #1a4fb5; box-shadow: inset 1px 1px 3px #0d2c73; }
.lang { width: 24px; height: 28px; margin-left: 1150px; background: #2f6cc4; display: grid; place-items: center; }
.desk { margin-left: 21px; }
.more { margin-left: 13px; }
.tray { position: relative; width: 132px; height: 51px; margin-left: 20px; padding-left: 16px; display: flex; align-items: center; gap: 2px; border-left: 1.5px solid #0c3f96; background: linear-gradient(#1b74c4 0, #21b1f5 8%, #129ae8 30%, #0f93ea 85%, #0c68b4); }
.arrow { position: absolute; left: -13px; top: 10px; }
.clock { margin-left: 9px; }

.callouts { position: absolute; inset: 0; }
.note { font-family: "Comic Sans MS", Inter, "Open Sans", sans-serif; font-feature-settings: "cv11" 1; font-size: 51px; word-spacing: 6px; letter-spacing: 0.8px; fill: #c80000; stroke: #c80000; stroke-width: 0.3; stroke-linejoin: round; }
.note.bold { font-size: 50px; font-weight: 600; font-feature-settings: "cv11" 1, "case" 1; word-spacing: 14px; letter-spacing: 1.5px; stroke-width: 1.2; }
</style>
